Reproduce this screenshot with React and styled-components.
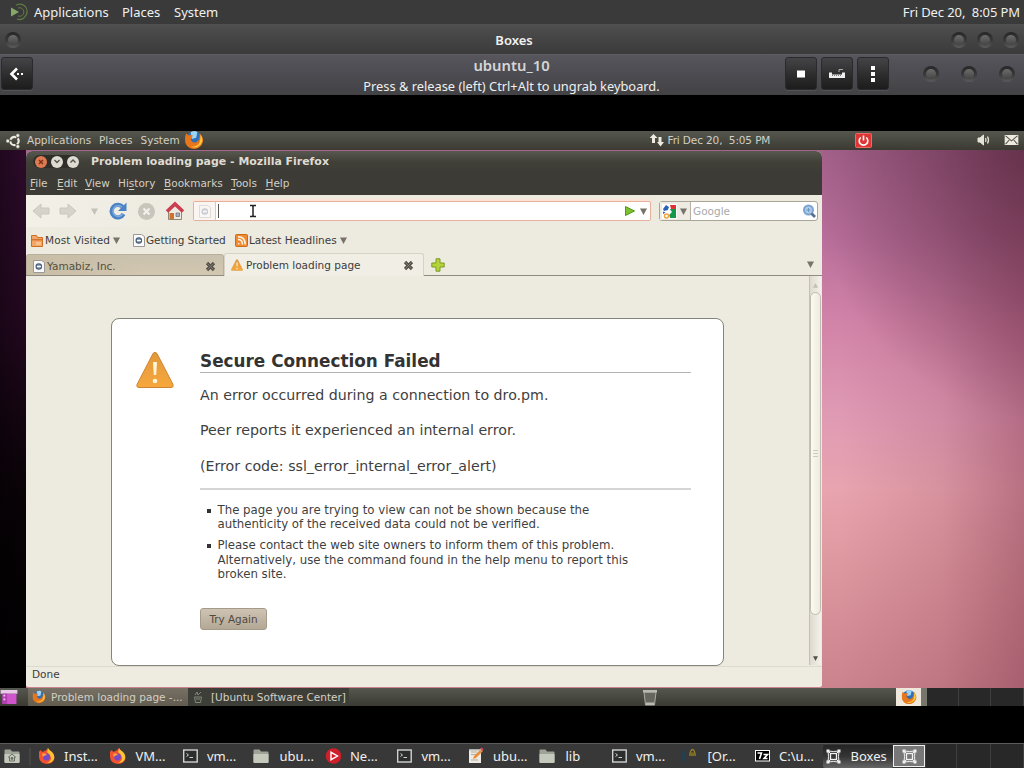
import styled, { createGlobalStyle } from "styled-components"

const GlobalStyle = createGlobalStyle`
  * { box-sizing:border-box; }
  body {
    margin:0;
    background:#000;
    overflow:hidden;
  }
  svg { display:block; flex:none; }
`;

const Screen = styled.div`
  width:1024px;
  height:768px;
  display:flex;
  flex-direction:column;
  background:#000;
  font-family:"Noto Sans", sans-serif;
  font-size:13px;
  color:#f0f0f0;
  white-space:pre;
`;

/* host desktop */

const HostPanel = styled.div`
  height:24px;
  flex:none;
  display:flex;
  align-items:center;
  padding:0 4px 0 9px;
  background:#3a3a3a;
`;

const Item = styled.span`
  flex:none;
  display:flex;
  align-items:center;
  width:${(props) => props.$w ? props.$w + "px" : "auto"};
  letter-spacing:${(props) => props.$ls || 0}px;
`;

const Spacer = styled.div`
  flex:1;
`;

const TitleBar = styled.div`
  height:30px;
  flex:none;
  display:grid;
  grid-template-columns:1fr auto 1fr;
  align-items:center;
  padding:2px 5px 0 9px;
  background:linear-gradient(#505050, #454545 45%, #3b3b3b);
  font-weight:600;
  font-size:13px;
`;

const Knobs = styled.div`
  display:flex;
  margin-left:${(props) => props.$end ? 0 : -4}px;
  justify-content:${(props) => props.$end ? "flex-end" : "flex-start"};
  gap:${(props) => props.$gap || 0}px;
`;

const Knob = styled.div`
  width:16px;
  height:16px;
  border-radius:50%;
  padding:3px;
  background:linear-gradient(#262626, #3a3a3a 55%, #5c5c5c);

  &::before {
    content:"";
    display:block;
    width:10px;
    height:10px;
    border-radius:50%;
    background:linear-gradient(#6c6c6c, #444);
  }
`;

const HeaderBar = styled.div`
  height:41px;
  flex:none;
  display:grid;
  grid-template-columns:1fr 298px 1fr;
  align-items:start;
  padding:0 9px 0 8px;
  background:linear-gradient(#57565d, #4c4b51 50%, #424144);
  border-top:1px solid #5d5d62;
`;

const HeaderText = styled.div`
  text-align:center;
`;

const HeaderTitle = styled.div`
  font-size:14.8px;
  font-weight:600;
  line-height:20px;
  color:#d6d6d6;
`;

const HeaderHint = styled.div`
  display:flex;
  justify-content:center;
  font-size:12.83px;
  line-height:23px;
  color:#efefef;
`;

const HeaderSide = styled.div`
  display:flex;
  align-items:center;
  gap:4px;
  padding-top:2px;
  margin-left:${(props) => props.$end ? 0 : -7}px;
  justify-content:${(props) => props.$end ? "flex-end" : "flex-start"};
`;

const DarkButton = styled.div`
  width:32px;
  height:33px;
  display:flex;
  align-items:center;
  justify-content:center;
  border-radius:3px;
  border:1px solid #2a2a2c;
  background:linear-gradient(#444446, #2b2b2c 60%, #1c1c1d);
  box-shadow:0 1px 0 #525256;
`;

const HeaderKnobs = styled.div`
  display:flex;
  gap:22px;
  padding-left:30px;
`;

const Black = styled.div`
  height:${(props) => props.$h}px;
  flex:none;
  background:#000;
`;

/* guest desktop */

const Guest = styled.div`
  height:575px;
  flex:none;
  display:flex;
  flex-direction:column;
  font-family:"DejaVu Sans", sans-serif;
  font-size:10.5px;
  color:#3c3c3c;
`;

const GuestPanel = styled.div`
  height:19px;
  flex:none;
  display:flex;
  align-items:center;
  padding:0 5px 1px 6px;
  background:linear-gradient(#55564d, #45463d 60%, #3a3a33);
  color:#d3cfc4;
`;

const Wallpaper = styled.div`
  flex:1;
  display:flex;
  padding:1px 202px 0 26px;
  background:
    radial-gradient(ellipse 240px 290px at 1040px -20px, #4c2338b0, #4c233800),
    linear-gradient(90deg, #7a304800 82%, #7a304828 92%, #7a304870),
    linear-gradient(#a8648f 0, #b96f9b 16%, #d283a8 32%, #e09bb4 50%, #e8a4af 63%, #dd979e 78%, #cb838d 100%);

  &::before {
    content:"";
    width:26px;
    margin-left:-26px;
    margin-top:-1px;
    background:linear-gradient(90deg, #00000044, #0000), linear-gradient(#2c0b2a, #240820 30%, #080206 65%, #000);
  }
`;

const Window = styled.div`
  width:796px;
  height:536px;
  flex:none;
  display:flex;
  flex-direction:column;
  border-radius:6px 6px 3px 3px;
  overflow:hidden;
  background:#edeae0;
`;

const WindowTitle = styled.div`
  height:22px;
  flex:none;
  display:flex;
  align-items:center;
  padding:0 0 1px 7px;
  background:linear-gradient(#585850, #403f38 50%, #3c3b35);
  color:#dfdbd2;
  font-size:10.95px;
  font-weight:bold;
`;

const WindowButtons = styled.div`
  display:flex;
  align-items:center;
  gap:4px;
  width:46px;
  height:13px;
  padding-left:2px;
  margin-right:12px;
  border-radius:7px;
  background:#2f2e29;
`;

const WindowButton = styled.div`
  width:12px;
  height:12px;
  border-radius:50%;
  display:flex;
  align-items:center;
  justify-content:center;
  background:${(props) => props.$close ? "#dd7a52" : "#dedbd2"};
`;

const MenuBar = styled.div`
  height:22px;
  flex:none;
  display:flex;
  align-items:center;
  padding:0 0 2px 4px;
  background:#3c3b35;
  color:#d3cfc4;

  u { text-underline-offset:1.5px; }
`;

const NavBar = styled.div`
  height:32px;
  flex:none;
  display:flex;
  align-items:center;
  padding:0 4px 0 6px;
  background:linear-gradient(90deg, #f3f0e8 0, #edeae0 20%);
`;

const UrlBox = styled.div`
  width:458px;
  height:20px;
  display:flex;
  align-items:center;
  border:1px solid #e3b19c;
  border-radius:2px;
  background:#fff;
  box-shadow:0 -2px 2px #fde1d3;
  padding-right:3px;
`;

const UrlIcon = styled.div`
  width:22px;
  height:18px;
  display:flex;
  align-items:center;
  justify-content:center;
  border-right:1px solid #ccc;
  background:#f9f5f3;
  margin-right:1px;
`;

const Caret = styled.div`
  width:1px;
  height:14px;
  margin-left:1px;
  background:#555;
`;

const SearchBox = styled.div`
  width:159px;
  height:20px;
  margin-left:8px;
  display:flex;
  align-items:center;
  border:1px solid #a9a597;
  border-radius:3px;
  background:#fff;
  color:#aaa;
`;

const Engine = styled.div`
  width:31px;
  height:18px;
  display:flex;
  align-items:center;
  gap:3px;
  padding-left:2px;
  margin-right:2px;
  background:#eeebe2;
  border-right:1px solid #b5b1a6;
`;

const BookmarkBar = styled.div`
  height:26px;
  flex:none;
  display:flex;
  align-items:center;
  padding-left:5px;
`;

const TabBar = styled.div`
  height:23px;
  flex:none;
  display:flex;
  align-items:flex-end;
  border-bottom:1px solid #8f8b80;
`;

const Tab = styled.div`
  width:${(props) => props.$active ? 200 : 198}px;
  height:${(props) => props.$active ? 23 : 21}px;
  margin-bottom:${(props) => props.$active ? "-1px" : "0"};
  display:flex;
  align-items:center;
  padding:${(props) => props.$active ? "1px 9px 1px 6px" : "3px 7px 1px 6px"};
  border:1px solid ${(props) => props.$active ? "#d6d2c6" : "#b8b09d"};
  border-bottom:none;
  border-radius:3px 3px 0 0;
  background:${(props) => props.$active ? "#f1eee6" : "linear-gradient(90deg, #c9bda6, #0000 60%), linear-gradient(#c9c1ae, #d3c7b0)"};
  color:${(props) => props.$active ? "#3c3c3c" : "#55503f"};
`;

const TabExtras = styled.div`
  flex:1;
  height:22px;
  display:flex;
  align-items:center;
  justify-content:space-between;
  padding:1px 8px 0 7px;
`;

const Content = styled.div`
  flex:1;
  display:flex;
  justify-content:space-between;
  padding-left:85px;
`;

const Card = styled.div`
  width:613px;
  height:348px;
  margin-top:42px;
  display:flex;
  align-items:flex-start;
  gap:26px;
  padding:32px 32px 0 24px;
  border:1px solid #85857c;
  border-radius:8px;
  background:#fff;
`;

const ErrorText = styled.div`
  width:491px;
  font-size:14.2px;
  line-height:20px;
  color:#3f3f3f;
`;

const ErrorTitle = styled.h1`
  margin:0 0 12px;
  height:22px;
  font-size:16.85px;
  line-height:20px;
  color:#333;
  border-bottom:1px solid #b4b4b4;
`;

const ErrorLine = styled.p`
  margin:0 0 15.3px;

  &:nth-of-type(3) { margin-bottom:12px; }
`;

const Reasons = styled.ul`
  margin:0;
  padding:13px 0 0 17px;
  list-style:none;
  border-top:2px solid #d5d5d5;
  font-size:11.77px;
  line-height:14.5px;
`;

const Reason = styled.li`
  margin-bottom:6.5px;
  display:flex;

  &::before {
    content:"";
    width:4px;
    height:4px;
    margin:6px 7px 0 -10.5px;
    background:#333;
  }
`;

const TryAgain = styled.button`
  width:67px;
  height:22px;
  margin-top:20px;
  padding:0;
  border:1px solid #a59b8b;
  border-radius:3px;
  background:linear-gradient(#cfc4b4, #b3a795);
  font:10.4px "DejaVu Sans", sans-serif;
  color:#4f493e;
`;

const ScrollBar = styled.div`
  width:12px;
  height:389px;
  margin-right:1px;
  display:flex;
  flex-direction:column;
  align-items:center;
  padding:6px 0 3px;
  border-left:1px solid #c4c0b5;
  background:linear-gradient(90deg, #dedad0, #f3f1ea);
`;

const Thumb = styled.div`
  width:11px;
  height:323px;
  margin-top:3px;
  display:flex;
  flex-direction:column;
  align-items:center;
  justify-content:center;
  gap:2px;
  border:1px solid #c0bcb0;
  border-radius:6px;
  background:linear-gradient(90deg, #fbfaf2, #eeebdf);
`;

const Grip = styled.div`
  width:5px;
  height:1px;
  background:#cfcbc0;
`;

const StatusBar = styled.div`
  height:21px;
  flex:none;
  padding:1px 0 0 6px;
  line-height:13px;
  border-top:1px solid #dedbce;
  background:#eeebe0;
`;

const GuestTask = styled.div`
  width:${(props) => props.$w}px;
  height:18px;
  display:flex;
  align-items:center;
  gap:${(props) => props.$active ? 5 : 8}px;
  padding-left:${(props) => props.$active ? 4 : 5}px;
  background:${(props) => props.$active ? "linear-gradient(#777064, #625c50)" : "#3e3e38"};
`;

const BottomPanel = styled(GuestPanel)`
  height:18px;
  padding:0;
`;

const PanelIcon = styled.div`
  width:28px;
`;

const GuestTray = styled.div`
  width:25px;
  height:18px;
  display:flex;
  align-items:center;
  justify-content:center;
  background:#eee8dc;
`;

const TrayEdge = styled.div`
  width:6px;
  height:18px;
  background:#77776d;
`;

const Cell = styled.div`
  width:${(props) => props.$w}px;
  height:100%;
  border-right:1px solid #404040;
  background:#282828;
`;

/* host taskbar */

const TaskBar = styled.div`
  height:25px;
  flex:none;
  display:flex;
  align-items:center;
  padding-left:3px;
  background:#383838;
  border-top:1px solid #5c5c5c;
`;

const Separator = styled.div`
  width:2px;
  height:17px;
  margin:0 6px 0 7px;
  background:#444;
`;

const Task = styled.div`
  width:${(props) => props.$w || 71.5}px;
  height:23px;
  flex:none;
  display:flex;
  align-items:center;
  gap:8px;
  padding-left:${(props) => props.$active ? 2 : 1}px;
  border-radius:2px;
  background:${(props) => props.$active ? "linear-gradient(#242424, #353535 50%, #666)" : "none"};
`;

const Workspace = styled.div`
  width:32px;
  height:22px;
  margin:0 1px 0 0;
  display:flex;
  align-items:center;
  justify-content:center;
  border:1px solid #eee;
  background:#777;
`;

const Firefox = ({ size = 18 }) => (
  <svg width={size} height={size} viewBox="0 0 18 18">
    <circle cx="9" cy="9" r="7.6" fill="#2f6fb8" />
    <path d="M6 2q4-2 6 0l-1 5-4 1z" fill="#9bd3f5" />
    <path d="M1 6l1-3 2 2q2-1 4 0L6 8q1 4 5 3 4-2 3-8 4 4 3 8-2 6-8 6T1 11z" fill="#e8761c" />
    <path d="M15 4q3 5 0 9-4 4-9 2 7 0 8-4 1-3 1-7z" fill="#ffca3c" />
  </svg>
)

const NewFirefox = () => (
  <svg width="18" height="18" viewBox="0 0 18 18">
    <path d="M1 5l1.500-2 2 2 2-1q2 0 3-3 1 2 4 4 3 3 3 6-1 6-8 6-7-1-7.500-7z" fill="#f2522f" />
    <path d="M10 1q1 2 4 4 3 3 2 7-2 4-7 4 4-2 4-5-1-4-4-6 1-2 1-4z" fill="#ffc331" />
    <circle cx="8.5" cy="10" r="3.4" fill="#7649c9" />
    <path d="M4 7q3-2 5 1-3 0-4 2z" fill="#ffa436" />
  </svg>
)

const Terminal = () => (
  <svg width="18" height="16" viewBox="0 0 18 16" fill="none" stroke="#d0d3cf">
    <rect x="2.700" y="2" width="13.500" height="12" fill="#2c2e2d" strokeWidth="1.400" />
    <path d="M5.500 5.500l2 1.500-2 1.500M8.500 9.500h3.500" />
  </svg>
)

const Folder = ({ home }) => (
  <svg width="19" height="17" viewBox="0 0 18 17">
    <path d="M1 2.5q0-1 1-1h5l1.5 2H15q1 0 1 1V14q0 1-1 1H2q-1 0-1-1z" fill="#9da497" />
    <path d="M1 6h15v8q0 1-1 1H2q-1 0-1-1z" fill="#c4c9bb" />
    {home && <path d="M4.5 9.5l4-3.5 4 3.5M6 9v4h5V9" fill="none" stroke="#6a7064" />}
    {home && <circle cx="8.5" cy="10.5" r="1.4" fill="#6a7064" />}
  </svg>
)

const MediaIcon = () => (
  <svg width="18" height="18" viewBox="0 0 18 18">
    <circle cx="9.500" cy="9" r="7.8" fill="#cf1f2b" />
    <path d="M7 5.300v7.400L13.500 9z" fill="none" stroke="#fff" strokeWidth="1.400" />
  </svg>
)

const EditorIcon = () => (
  <svg width="18" height="18" viewBox="0 0 18 18">
    <path d="M2 2h12v14H2z" fill="#eceae2" />
    <path d="M4 5h6M4 7.500h5M4 13h7" stroke="#b3aea5" />
    <path d="M6 12l1-3 7-7 2 2-7 7z" fill="#e98f3c" />
    <path d="M13 1.500l2-1 1.500 2-1.500 1.500z" fill="#d9455a" />
    <path d="M2 2h12v1.500H2z" fill="#b0b0b0" />
  </svg>
)

const SevenZip = () => (
  <svg width="18" height="16" viewBox="0 0 18 16">
    <rect x="2.500" y="2.500" width="14" height="10.500" fill="#000" stroke="#fff" />
    <path d="M4.500 5h4L6.500 11M10.500 6.500h4L11 10.500h3.500" fill="none" stroke="#fff" strokeWidth="1.600" />
  </svg>
)

const LockIcon = () => (
  <svg width="18" height="18" viewBox="0 0 18 18">
    <path d="M1 3v12l3-2V5z" fill="#24404f" />
    <path d="M9.500 6V4.500q2-4 4 0V6" fill="none" stroke="#917d2d" strokeWidth="1.300" />
    <path d="M8 5.500h7v3.500H8z" fill="#786b26" />
  </svg>
)

const BoxesIcon = () => (
  <svg width="17" height="17" viewBox="0 0 17 17" fill="none" stroke="#f2f2f2">
    <path d="M3 3l2.500 2.500M14 3l-2.500 2.500M3 14l2.500-2.500M14 14l-2.500-2.500M3 3q5.500 1 11 0-1 5.500 0 11-5.500-1-11 0 1-5.500 0-11z" />
    <rect x="5.500" y="5.500" width="6" height="6" strokeWidth="1.300" />
    <path d="M1.500 1.500h3v3h-3zM12.500 1.500h3v3h-3zM1.500 12.500h3v3h-3zM12.500 12.500h3v3h-3z" fill="#f2f2f2" stroke="none" />
  </svg>
)

const Mate = () => (
  <svg width="25" height="20" viewBox="0 0 25 20" fill="none">
    <path d="M2 5.500l8 4.500-8 4.500z" fill="#86a866" />
    <path d="M7 3.200q5-2.700 9 1a8 8 0 0 1-8 13" stroke="#5f7a42" strokeWidth="1.200" />
    <path d="M9 6a4.300 4.300 0 1 1 0 8" stroke="#5f7a42" />
  </svg>
)

const UbuntuLogo = () => (
  <svg width="21" height="17" viewBox="0 0 21 17" fill="none" stroke="#eeeae0">
    <circle cx="8.500" cy="9" r="4.200" strokeWidth="2.200" strokeDasharray="7.300 1.500" strokeDashoffset="3.500" />
    <g fill="#eeeae0" stroke="#45463d" strokeWidth=".6">
      <circle cx="1.800" cy="9" r="1.900" />
      <circle cx="11.800" cy="3.500" r="1.900" />
      <circle cx="11.800" cy="14.500" r="1.900" />
    </g>
  </svg>
)

const Down = ({ color = "#77736a", w = 7 }) => (
  <svg width={w} height="7" viewBox="0 0 7 7"><path d="M0 .5h7L3.500 7z" fill={color} /></svg>
)

const Up = () => (
  <svg width="5" height="7" viewBox="0 0 7 7"><path d="M0 6.500h7L3.500 0z" fill="#c3bfb4" /></svg>
)

const Arrow = ({ flip }) => (
  <svg width="19" height="18" viewBox="0 0 19 18">
    <path d="M1 9l8-7v4h8v6H9v4z" fill="#d6d3ca" stroke="#cbc8bf" transform={flip ? "matrix(-1 0 0 1 18 0)" : undefined} />
  </svg>
)

const Reload = () => (
  <svg width="20" height="20" viewBox="0 0 20 20" fill="none">
    <path d="M15 6.500A6.300 6.300 0 1 0 15.500 13" stroke="#4d83c4" strokeWidth="4.200" />
    <path d="M14.500 7A5.300 5.300 0 1 0 15 12.500" stroke="#80aee0" strokeWidth="1.500" />
    <path d="M18.500 1.500V10H10z" fill="#4d83c4" />
  </svg>
)

const Stop = () => (
  <svg width="19" height="19" viewBox="0 0 19 19">
    <circle cx="9.500" cy="9.500" r="8.500" fill="#c8c5bd" />
    <path d="M6.500 6.500l6 6M12.500 6.500l-6 6" stroke="#f2f0ea" strokeWidth="2.200" />
  </svg>
)

const Home = () => (
  <svg width="20" height="20" viewBox="0 0 20 20">
    <path d="M3.500 10L10 4l6.500 6v8.500h-13z" fill="#eeeadf" stroke="#918775" />
    <path d="M4.500 12H9v6H4.500z" fill="#d0722d" />
    <path d="M11 12h3.500v3.500H11z" fill="#aac" stroke="#777" strokeWidth=".8" />
    <path d="M2 10.500L10 3l8 7.500" fill="none" stroke="#cc3d50" strokeWidth="3.600" />
  </svg>
)

const PageIcon = ({ faint }) => (
  <svg width="12" height="14" viewBox="0 0 12 14" opacity={faint ? 0.28 : 1}>
    <path d="M.5 1.500h8l3 2v10H.5z" fill="#fafafa" stroke="#999" />
    <circle cx="5.800" cy="7.500" r="2.700" fill="#8fa6c4" stroke="#4d6079" strokeWidth="1.200" />
    <path d="M4 7.500h4" stroke="#fff" />
  </svg>
)

const FolderFeed = () => (
  <svg width="13" height="13" viewBox="0 0 13 13">
    <path d="M.5 1.500h5l1 2h5v9H.5z" fill="#f0a768" stroke="#d26d20" />
    <path d="M1 5h10v1.500H1z" fill="#d8722a" />
    <path d="M5 8h5v3H5z" fill="#f9c08c" />
  </svg>
)

const Rss = () => (
  <svg width="13" height="13" viewBox="0 0 13 13" fill="none" stroke="#fff3e5" strokeWidth="1.500">
    <rect x=".5" y=".5" width="12" height="12" rx="1" fill="#ee8b33" stroke="#cc6a15" strokeWidth="1" />
    <path d="M3 5.500q4.500 0 4.500 5M3 2.800q7.200 0 7.200 7.700" />
    <circle cx="3.700" cy="9.700" r=".8" fill="#fff" stroke="none" />
  </svg>
)

const Warning = ({ size }) => (
  <svg width={size} height={size} viewBox="0 0 38 38">
    <defs>
      <linearGradient id="warn" x1="0" y1="0" x2="0" y2="1">
        <stop offset="0" stopColor="#e2973c" />
        <stop offset="1" stopColor="#f6a83d" />
      </linearGradient>
    </defs>
    <path d="M17 2.500q2-2.500 4 0l16 31q1 3-2 3H3q-3 0-2-3z" fill="url(#warn)" stroke="#cf852f" />
    <path d="M17 11h4l-.8 13h-2.400z" fill="#fff6d8" />
    <circle cx="19" cy="30" r="2.300" fill="#fff6d8" />
  </svg>
)

const Cross = () => (
  <svg width="11" height="11" viewBox="0 0 11 11">
    <path d="M2 2l7 7M9 2l-7 7" stroke="#55514a" strokeWidth="3.200" />
    <path d="M2.500 2.500l6 6M8.500 2.500l-6 6" stroke="#8a867d" strokeWidth=".8" />
  </svg>
)

const Plus = () => (
  <svg width="14" height="14" viewBox="0 0 14 14">
    <path d="M5 .8h4V5h4.200v4H9v4.200H5V9H.8V5H5z" fill="#b4d43a" stroke="#7b9a27" />
  </svg>
)

const Go = () => (
  <svg width="12" height="12" viewBox="0 0 12 12">
    <path d="M1.500 1.500l9 4.500-9 4.500z" fill="#7bc22d" stroke="#4e9a16" />
  </svg>
)

const GoogleIcon = () => (
  <svg width="15" height="15" viewBox="0 0 15 15">
    <path d="M0 0h15v15H0z" fill="#fff" />
    <path d="M8 1h6v4H9z" fill="#d33" />
    <path d="M8 5h6v9H8l-1-4z" fill="#16984a" />
    <path d="M1 5l3-4 3 2-1 3-4 1z" fill="#2a62b8" />
    <path d="M0 8l3 1v3H0zM7 4l3 4-3 3-2-3z" fill="#fff" />
    <path d="M1 7.500l2.500 1L1 10z" fill="#2a62b8" />
    <circle cx="4.500" cy="12" r="2" fill="none" stroke="#eea53b" strokeWidth="1.500" />
  </svg>
)

const Magnifier = () => (
  <svg width="15" height="15" viewBox="0 0 15 15">
    <circle cx="6.500" cy="6" r="4.500" fill="#aecbe8" stroke="#7ba5d0" strokeWidth="2" />
    <path d="M4.500 6h4M6.500 4v4" stroke="#6f97c2" />
    <path d="M9.500 9.500l3.500 3.500" stroke="#5b6f88" strokeWidth="2.800" />
  </svg>
)

const IBeam = () => (
  <svg width="8" height="14" viewBox="0 0 8 14" fill="none" stroke="#222" strokeWidth="1.500">
    <path d="M1 1.500h2.300L4 2.500l.7-1H7M1 12.500h2.300l.7-1 .7 1H7M4 2v10" />
  </svg>
)

const Network = () => (
  <svg width="17" height="14" viewBox="0 0 17 14" fill="#eeeadf">
    <path d="M3.500 1l4 4H5v5H2V5H-.5zM8.500 4h3v5H14l-3.500 4.500L7 9h1.500z" />
  </svg>
)

const Power = () => (
  <svg width="17" height="15" viewBox="0 0 17 15" fill="none" stroke="#fff" strokeWidth="1.600">
    <rect x=".5" y=".5" width="16" height="14" rx="1" fill="#df3535" stroke="#ee6a62" strokeWidth="1" />
    <path d="M5.800 4.500a4.300 4.300 0 1 0 5.400 0M8.500 2.500v5" />
  </svg>
)

const Volume = () => (
  <svg width="15" height="12" viewBox="0 0 15 12" fill="none" stroke="#e6e2d6">
    <path d="M1 4h2l3.500-3v10L3 8H1z" fill="#e6e2d6" />
    <path d="M8.500 4q1 2 0 4M10.500 2.500q2 3.500 0 7" strokeWidth="1.300" />
  </svg>
)

const Mail = () => (
  <svg width="15" height="10" viewBox="0 0 15 11">
    <path d="M0 0h15v11H0z" fill="#eeeadf" />
    <path d="M1 1l6.500 5.500L14 1M1 10l4-4.500M14 10l-4-4.500" fill="none" stroke="#55554b" strokeWidth="1.200" />
  </svg>
)

const Trash = () => (
  <svg width="16" height="17" viewBox="0 0 16 17">
    <path d="M2 3h12l-1.500 13h-9z" fill="#66665f" stroke="#aaa9a2" />
    <path d="M1 1h14v2.500H1z" fill="#b9b8b1" />
    <path d="M4 13.500h8v2.500H4z" fill="#b9b8b1" />
  </svg>
)

const ShowDesktop = () => (
  <svg width="18" height="14" viewBox="0 0 18 15">
    <path d="M0 0h18v4H0z" fill="#e9c9e8" />
    <path d="M2 4h15v11H2z" fill="#ce55cb" />
    <path d="M2 4h5v11H2z" fill="#b33db3" />
    <path d="M3 5h2v2H3zM3 9h2v2H3z" fill="#f0c5ee" />
  </svg>
)

const SoftwareCenter = () => (
  <svg width="10" height="14" viewBox="0 0 10 14" fill="none" stroke="#83897b">
    <path d="M2 5l2-3 1 3 3-3M1.500 7h7l-1 5.500h-5zM3 9h4" />
  </svg>
)

const guestMenu = [["Applications", 72], ["Places", 41.5], ["System", 43]]
const firefoxMenu = [["", "F", "ile", 27], ["", "E", "dit", 28], ["", "V", "iew", 33], ["Hi", "s", "tory", 46], ["", "B", "ookmarks", 67], ["", "T", "ools", 34.5], ["", "H", "elp", 30]]

const tasks = [
  [NewFirefox, "Inst..."], [NewFirefox, "VM..."], [Terminal, "vm..."], [Folder, "ubu..."],
  [MediaIcon, "Ne..."], [Terminal, "vm..."], [EditorIcon, "ubu..."], [Folder, "lib"],
  [Terminal, "vm..."], [LockIcon, "[Or..."], [SevenZip, "C:\\u..."],
]

const HostTop = () => (
  <>
    <HostPanel>
      <Item $w={25}><Mate /></Item>
      <Item $w={88}>Applications</Item>
      <Item $w={52}>Places</Item>
      <Item>System</Item>
      <Spacer />
      <Item $ls={-0.1}>Fri Dec 20,  8:05 PM</Item>
    </HostPanel>
    <TitleBar>
      <Knobs><Knob /></Knobs>
      <span>Boxes</span>
      <Knobs $end $gap={10}><Knob /><Knob /><Knob /></Knobs>
    </TitleBar>
    <HeaderBar>
      <HeaderSide>
        <DarkButton>
          <svg width="18" height="16" viewBox="0 0 18 16" fill="none" stroke="#fff">
            <path d="M9 2.500L3.500 8 9 13.500" strokeWidth="2.600" />
            <path d="M9 8h2M13 8h2" strokeWidth="2" />
          </svg>
        </DarkButton>
      </HeaderSide>
      <HeaderText>
        <HeaderTitle>ubuntu_10</HeaderTitle>
        <HeaderHint>Press & release (left) Ctrl+Alt to ungrab keyboard.</HeaderHint>
      </HeaderText>
      <HeaderSide $end>
        <DarkButton><svg width="8" height="8"><path d="M0 .5h8v7H0z" fill="#fff" /></svg></DarkButton>
        <DarkButton>
          <svg width="16" height="13" viewBox="0 0 16 13" fill="none">
            <path d="M0 5.500h3v2h10v-2h3V11H0z" fill="#eee" />
            <path d="M3 8.500h9" stroke="#777" strokeDasharray="1 1" />
            <path d="M10 5V2.500h4" stroke="#aaa" />
          </svg>
        </DarkButton>
        <DarkButton><svg width="4" height="16"><path d="M0 0h4v4H0zM0 6h4v4H0zM0 12h4v4H0z" fill="#fff" /></svg></DarkButton>
        <HeaderKnobs><Knob /><Knob /><Knob /></HeaderKnobs>
      </HeaderSide>
    </HeaderBar>
  </>
)

const FirefoxWindow = () => (
  <Window>
    <WindowTitle>
      <WindowButtons>
        <WindowButton $close><svg width="6" height="6"><path d="M1 1l4 4M5 1L1 5" stroke="#7c3014" strokeWidth="1.400" /></svg></WindowButton>
        <WindowButton><svg width="6" height="5"><path d="M.5 1L3 3.500 5.500 1" fill="none" stroke="#55524b" strokeWidth="1.400" /></svg></WindowButton>
        <WindowButton><svg width="6" height="5"><path d="M.5 3.500L3 1l2.500 2.500" fill="none" stroke="#55524b" strokeWidth="1.400" /></svg></WindowButton>
      </WindowButtons>
      Problem loading page - Mozilla Firefox
    </WindowTitle>
    <MenuBar>
      {firefoxMenu.map(([before, key, after, w]) => (
        <Item key={after} $w={w}><span>{before}<u>{key}</u>{after}</span></Item>
      ))}
    </MenuBar>
    <NavBar>
      <Item $w={27}><Arrow /></Item>
      <Item $w={32}><Arrow flip /></Item>
      <Item $w={17}><Down color="#c5c2b9" /></Item>
      <Item $w={29}><Reload /></Item>
      <Item $w={28}><Stop /></Item>
      <Item $w={28}><Home /></Item>
      <UrlBox>
        <UrlIcon><PageIcon faint /></UrlIcon>
        <Caret />
        <Item $w={30} />
        <IBeam />
        <Spacer />
        <Item $w={16}><Go /></Item>
        <Down />
      </UrlBox>
      <SearchBox>
        <Engine><GoogleIcon /><Down /></Engine>
        Google
        <Spacer />
        <Magnifier />
      </SearchBox>
    </NavBar>
    <BookmarkBar>
      <Item $w={14}><FolderFeed /></Item>
      <Item $w={68} $ls={0.1}>Most Visited</Item>
      <Item $w={20}><Down /></Item>
      <Item $w={13}><PageIcon /></Item>
      <Item $w={89} $ls={-0.1}>Getting Started</Item>
      <Item $w={14}><Rss /></Item>
      <Item $w={91}>Latest Headlines</Item>
      <Down />
    </BookmarkBar>
    <TabBar>
      <Tab>
        <Item $w={14}><PageIcon /></Item>
        Yamabiz, Inc.
        <Spacer />
        <Cross />
      </Tab>
      <Tab $active>
        <Item $w={15}><Warning size={12} /></Item>
        Problem loading page
        <Spacer />
        <Cross />
      </Tab>
      <TabExtras><Plus /><Down /></TabExtras>
    </TabBar>
    <Content>
      <Card>
        <Warning size={38} />
        <ErrorText>
          <ErrorTitle>Secure Connection Failed</ErrorTitle>
          <ErrorLine>An error occurred during a connection to dro.pm.</ErrorLine>
          <ErrorLine>Peer reports it experienced an internal error.</ErrorLine>
          <ErrorLine>(Error code: ssl_error_internal_error_alert)</ErrorLine>
          <Reasons>
            <Reason>{"The page you are trying to view can not be shown because the\nauthenticity of the received data could not be verified."}</Reason>
            <Reason>{"Please contact the web site owners to inform them of this problem.\nAlternatively, use the command found in the help menu to report this\nbroken site."}</Reason>
          </Reasons>
          <TryAgain>Try Again</TryAgain>
        </ErrorText>
      </Card>
      <ScrollBar>
        <Up />
        <Thumb><Grip /><Grip /><Grip /></Thumb>
        <Spacer />
        <Down color="#55514a" w={5} />
      </ScrollBar>
    </Content>
    <StatusBar>Done</StatusBar>
  </Window>
)

const App = () => {
  return (
    <Screen>
      <GlobalStyle />
      <HostTop />
      <Black $h={36} />
      <Guest>
        <GuestPanel>
          <Item $w={21}><UbuntuLogo /></Item>
          {guestMenu.map(([name, w]) => <Item key={name} $w={w}>{name}</Item>)}
          <Item $w={466}><Firefox size={20} /></Item>
          <Item $w={18}><Network /></Item>
          <Item $w={187} $ls={-0.12}>Fri Dec 20,  5:05 PM</Item>
          <Power />
          <Spacer />
          <Item $w={27}><Volume /></Item>
          <Mail />
        </GuestPanel>
        <Wallpaper>
          <FirefoxWindow />
        </Wallpaper>
        <BottomPanel>
          <PanelIcon><ShowDesktop /></PanelIcon>
          <GuestTask $active $w={160}><Firefox size={14} />Problem loading page -...</GuestTask>
          <GuestTask $w={161}><SoftwareCenter />[Ubuntu Software Center]</GuestTask>
          <Item $w={293} />
          <Trash />
          <Spacer />
          <GuestTray><Firefox size={16} /></GuestTray>
          <TrayEdge />
          <Cell $w={32} />
          <Cell $w={32} />
          <Cell $w={33} />
        </BottomPanel>
      </Guest>
      <Black $h={37} />
      <TaskBar>
        <Folder home />
        <Separator />
        {tasks.map(([Icon, name], i) => <Task key={i}><Icon />{name}</Task>)}
        <Task $active $w={70}><BoxesIcon />Boxes</Task>
        <Workspace><BoxesIcon /></Workspace>
        <Cell $w={31} />
        <Cell $w={35} />
        <Cell $w={33} />
      </TaskBar>
    </Screen>
  )
}

export default App;
